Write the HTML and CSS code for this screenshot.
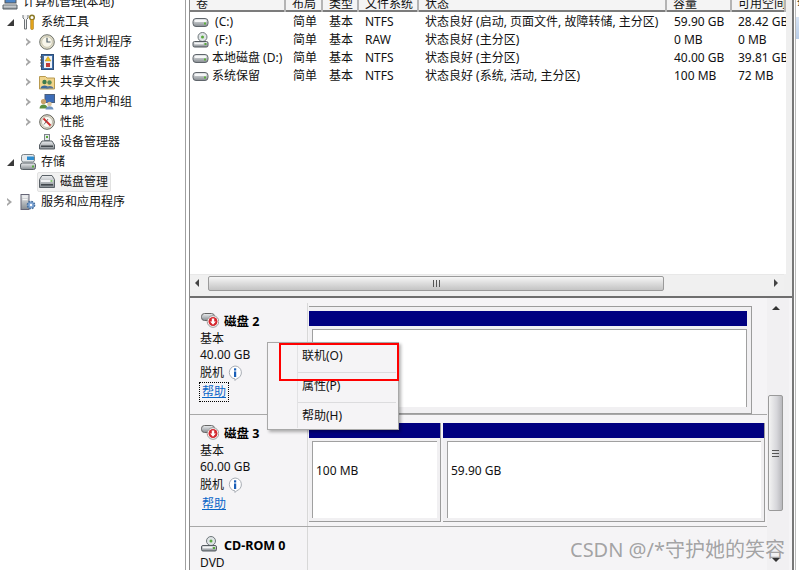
FILE: index.html
```html
<!DOCTYPE html>
<html lang="zh-CN">
<head>
<meta charset="utf-8">
<title>磁盘管理</title>
<link rel="stylesheet" href="styles.css">
</head>
<body>
<svg class="defs" width="0" height="0" aria-hidden="true">
  <defs>
    <linearGradient id="driveG" x1="0" y1="0" x2="0" y2="1"><stop offset="0" stop-color="#eceef0"/><stop offset="1" stop-color="#868c91"/></linearGradient>
    <symbol id="drive" viewBox="0 0 16 16"><rect x="0.500" y="4.500" width="15" height="8" rx="3" fill="url(#driveG)" stroke="#5f656b"/><rect x="2" y="6" width="12" height="2" rx="1" fill="#f6f7f8"/><rect x="11.500" y="8.500" width="2" height="2" fill="#5cb03c"/></symbol>
    <symbol id="cd" viewBox="0 0 16 16"><circle cx="10" cy="5" r="4.500" fill="#dfe4e6" stroke="#6f777b"/><circle cx="10" cy="5" r="1.500" fill="#59a83c"/><rect x="0.500" y="9.500" width="15" height="5.500" rx="1.500" fill="url(#driveG)" stroke="#555b60"/><rect x="2" y="11" width="9" height="1.300" fill="#f4f5f6"/><rect x="12" y="11" width="2" height="2" fill="#59a83c"/></symbol>
    <symbol id="offline" viewBox="0 0 18 16"><rect x="0.500" y="1.500" width="13" height="7" rx="3" fill="url(#driveG)" stroke="#666"/><circle cx="12" cy="9.500" r="5.800" fill="#fff" stroke="#9a9a9a"/><circle cx="12" cy="9.500" r="4.500" fill="#d4282e"/><path d="M10.800 6.500h2.400v3h1.700L12 12.800 9.100 9.500h1.700z" fill="#fff"/></symbol>
    <symbol id="info" viewBox="0 0 16 16"><path d="M8 1a6.500 6.500 0 0 1 1.500 12.800L8 15.500V13.900A6.500 6.500 0 0 1 8 1z" fill="#fff" stroke="#a8adb4"/><rect x="7" y="3.300" width="2.200" height="2.200" fill="#1a5fb8"/><rect x="7" y="6.500" width="2.200" height="5.500" fill="#1a5fb8"/></symbol>
    <symbol id="tools" viewBox="0 0 16 16"><path d="M3 1v3l1.500 1.500v9.500h2V5.500L8 4V1" fill="#f0f0f0" stroke="#6d7276" stroke-width="1"/><circle cx="12" cy="3.500" r="2.300" fill="none" stroke="#8c7a28" stroke-width="1.500"/><rect x="10.700" y="5.500" width="2.700" height="10" rx="1" fill="#e9a81c" stroke="#9b6e10" stroke-width=".6"/></symbol>
    <symbol id="clock" viewBox="0 0 16 16"><circle cx="8" cy="8" r="7.300" fill="#e0dcc8" stroke="#6f736c"/><circle cx="8" cy="8" r="5.300" fill="#f8f6ea" stroke="#b6b39d" stroke-width=".6"/><path d="M8 3.800V8h3.500" fill="none" stroke="#50606a" stroke-width="1.200"/></symbol>
    <symbol id="log" viewBox="0 0 16 16"><rect x="2.500" y="0.500" width="12" height="15" fill="#3f6ea8" stroke="#2d4e78"/><rect x="5" y="2" width="8" height="12" fill="#eef2f6"/><path d="M1 3h3M1 6h3M1 9h3M1 12h3" stroke="#555" stroke-width="1"/><path d="M9 2.500l3 4.500H6z" fill="#f2c21c" stroke="#9a7a10" stroke-width=".4"/><rect x="7" y="9" width="4" height="4" fill="#c23c38"/></symbol>
    <symbol id="share" viewBox="0 0 16 16"><path d="M0.500 2.500h6l1.500 1.500h7.500v11h-15z" fill="#f1d58c" stroke="#b89a50"/><circle cx="5.500" cy="8" r="2.200" fill="#3d7a4c"/><path d="M1.500 14.500c0-4 8-4 8 0z" fill="#3d6a9c"/><circle cx="10.500" cy="8.500" r="2.200" fill="#5b8a58"/><path d="M7 14.500c0-3.500 7.500-3.500 7.500 0z" fill="#56749a"/></symbol>
    <symbol id="users" viewBox="0 0 16 16"><rect x="6" y="0.500" width="9.500" height="8" fill="#3c6db8" stroke="#4b5f7c"/><circle cx="4.500" cy="7.500" r="2.600" fill="#c9a26a"/><path d="M0.500 14.500c0-5.500 8-5.500 8 0z" fill="#5a8f3f"/><circle cx="10.500" cy="10" r="2.300" fill="#d9c4a0"/><path d="M6.500 15.500c0-4.500 8-4.500 8 0z" fill="#6e93c0"/></symbol>
    <symbol id="perf" viewBox="0 0 16 16"><circle cx="8" cy="8" r="7.300" fill="#e6e1d0" stroke="#5f6058"/><circle cx="8" cy="8" r="5.500" fill="#fbfaf4" stroke="#9c9a8c" stroke-width=".6"/><path d="M4.500 4.500L11.500 11.500" stroke="#cf2a2a" stroke-width="1.800"/><path d="M5 10.500L9 5" stroke="#555" stroke-width=".8"/></symbol>
    <symbol id="device" viewBox="0 0 16 16"><rect x="5.500" y="0.500" width="5" height="6" fill="#e4e8ea" stroke="#7e858a"/><rect x="7" y="2" width="2" height="2" fill="#5aab3e"/><path d="M3 7h10l2.500 4v4H0.500v-4z" fill="url(#driveG)" stroke="#596066"/><rect x="2" y="11.500" width="12" height="1.500" fill="#42484d"/></symbol>
    <symbol id="disk" viewBox="0 0 16 16"><path d="M3 1.500h10l2.500 4v8H0.500v-8z" fill="url(#driveG)" stroke="#596066"/><rect x="2" y="6" width="12" height="2" fill="#f2f3f4"/><rect x="2" y="10" width="12" height="1.600" fill="#42484d"/><rect x="11.500" y="6.300" width="2" height="1.400" fill="#5aab3e"/></symbol>
    <symbol id="store" viewBox="0 0 16 16"><rect x="0.500" y="9" width="15" height="6.500" rx="2" fill="url(#driveG)" stroke="#596066"/><rect x="12" y="11.500" width="2" height="2" fill="#5aab3e"/><rect x="1.500" y="0.500" width="13" height="7.500" rx="2" fill="#e5e9ec" stroke="#7a8287"/><rect x="7" y="2.500" width="7" height="3.500" fill="#2e8ed0"/></symbol>
    <symbol id="svc" viewBox="0 0 16 16"><rect x="1" y="0.500" width="8" height="15" fill="url(#driveG)" stroke="#667"/><rect x="2.500" y="2.500" width="5" height="1.200" fill="#f5f5f5"/><rect x="2.500" y="5" width="5" height="1.200" fill="#f5f5f5"/><circle cx="11" cy="11" r="3.600" fill="#7fa6d6" stroke="#48709e" stroke-width="1.500" stroke-dasharray="1.800 1"/><circle cx="11" cy="11" r="1.200" fill="#fff"/></symbol>
    <symbol id="computer" viewBox="0 0 16 16"><rect x="3" y="0" width="11" height="9" fill="#4d86c8" stroke="#555"/><path d="M1 11h14v4H1z" fill="url(#driveG)" stroke="#596066"/></symbol>
  </defs>
</svg>

<div class="app">
  <nav class="tree">
    <div class="node lv0"><span class="tw"></span><svg class="ic"><use href="#computer"/></svg><span>计算机管理(本地)</span></div>
    <div class="node lv1"><span class="tw open"></span><svg class="ic"><use href="#tools"/></svg><span>系统工具</span></div>
    <div class="node lv2"><span class="tw"></span><svg class="ic"><use href="#clock"/></svg><span>任务计划程序</span></div>
    <div class="node lv2"><span class="tw"></span><svg class="ic"><use href="#log"/></svg><span>事件查看器</span></div>
    <div class="node lv2"><span class="tw"></span><svg class="ic"><use href="#share"/></svg><span>共享文件夹</span></div>
    <div class="node lv2"><span class="tw"></span><svg class="ic"><use href="#users"/></svg><span>本地用户和组</span></div>
    <div class="node lv2"><span class="tw"></span><svg class="ic"><use href="#perf"/></svg><span>性能</span></div>
    <div class="node lv2"><span class="tw none"></span><svg class="ic"><use href="#device"/></svg><span>设备管理器</span></div>
    <div class="node lv1"><span class="tw open"></span><svg class="ic"><use href="#store"/></svg><span>存储</span></div>
    <div class="node lv2 selected"><span class="tw none"></span><span class="sel"><svg class="ic"><use href="#disk"/></svg><span>磁盘管理</span></span></div>
    <div class="node lv1"><span class="tw"></span><svg class="ic"><use href="#svc"/></svg><span>服务和应用程序</span></div>
  </nav>

  <main class="main">
    <section class="volumes">
      <div class="vol-scroll">
        <div class="row head">
          <div class="c c1">卷</div><div class="c c2">布局</div><div class="c c3">类型</div><div class="c c4">文件系统</div><div class="c c5">状态</div><div class="c c6">容量</div><div class="c c7">可用空间</div>
        </div>
        <div class="row">
          <div class="c c1"><svg class="dv"><use href="#drive"/></svg><span class="gap"> (C:)</span></div><div class="c c2">简单</div><div class="c c3">基本</div><div class="c c4">NTFS</div><div class="c c5">状态良好 (启动, 页面文件, 故障转储, 主分区)</div><div class="c c6">59.90 GB</div><div class="c c7">28.42 GB</div>
        </div>
        <div class="row">
          <div class="c c1"><svg class="dv"><use href="#cd"/></svg><span class="gap"> (F:)</span></div><div class="c c2">简单</div><div class="c c3">基本</div><div class="c c4">RAW</div><div class="c c5">状态良好 (主分区)</div><div class="c c6">0 MB</div><div class="c c7">0 MB</div>
        </div>
        <div class="row">
          <div class="c c1"><svg class="dv"><use href="#drive"/></svg><span>本地磁盘 (D:)</span></div><div class="c c2">简单</div><div class="c c3">基本</div><div class="c c4">NTFS</div><div class="c c5">状态良好 (主分区)</div><div class="c c6">40.00 GB</div><div class="c c7">39.81 GB</div>
        </div>
        <div class="row">
          <div class="c c1"><svg class="dv"><use href="#drive"/></svg><span>系统保留</span></div><div class="c c2">简单</div><div class="c c3">基本</div><div class="c c4">NTFS</div><div class="c c5">状态良好 (系统, 活动, 主分区)</div><div class="c c6">100 MB</div><div class="c c7">72 MB</div>
        </div>
      </div>
      <div class="hbar">
        <span class="arrow left"></span>
        <div class="hthumb"><span class="grip"></span></div>
        <span class="arrow right"></span>
      </div>
    </section>

    <section class="disks">
      <div class="disk-list">
        <div class="disk d2">
          <div class="label">
            <div class="title"><svg class="off"><use href="#offline"/></svg><b>磁盘 2</b></div>
            <div>基本</div><div>40.00 GB</div>
            <div class="state">脱机 <svg class="inf"><use href="#info"/></svg></div>
            <div class="help"><a class="focus">帮助</a></div>
          </div>
          <div class="parts single">
            <div class="part p-full"><div class="bar"></div><div class="box"></div></div>
          </div>
        </div>
        <div class="disk">
          <div class="label">
            <div class="title"><svg class="off"><use href="#offline"/></svg><b>磁盘 3</b></div>
            <div>基本</div><div>60.00 GB</div>
            <div class="state">脱机 <svg class="inf"><use href="#info"/></svg></div>
            <div class="help"><a>帮助</a></div>
          </div>
          <div class="parts">
            <div class="part p-small"><div class="bar"></div><div class="box">100 MB</div></div>
            <div class="part p-big"><div class="bar"></div><div class="box">59.90 GB</div></div>
          </div>
        </div>
        <div class="disk cd">
          <div class="label">
            <div class="title"><svg class="cdi"><use href="#cd"/></svg><b>CD-ROM 0</b></div>
            <div>DVD</div>
          </div>
          <div class="parts"></div>
        </div>
      </div>
      <div class="vbar">
        <span class="arrow up"></span>
        <div class="vthumb"><span class="vgrip"></span></div>
        <span class="arrow down"></span>
      </div>
    </section>
  </main>
  <aside class="actions"><div class="act-head">操</div><div class="act-blue"></div></aside>
</div>

<div class="menu">
  <div class="mi">联机(O)</div>
  <div class="msep"></div>
  <div class="mi">属性(P)</div>
  <div class="msep"></div>
  <div class="mi">帮助(H)</div>
</div>
<div class="redbox"></div>
<div class="mark">CSDN @/*守护她的笑容</div>
</body>
</html>
```
FILE: styles.css
```css
* { box-sizing: border-box; }
html, body { margin: 0; padding: 0; width: 799px; height: 570px; overflow: hidden; background: #fff; }
body { font: 12px/16px "Noto Sans", "Noto Sans CJK SC", sans-serif; color: #111; position: relative; }
.defs { position: absolute; }
.app { display: flex; height: 570px; }

/* tree */
.tree { width: 186px; flex: none; border-right: 1px solid #a0a0a0; margin-top: -8px; height: 578px; background: #fff; }
.node { display: flex; align-items: center; height: 20px; }
.lv0 { padding-left: 2px; }
.lv0 .tw { display: none; }
.lv1 { padding-left: 6px; }
.lv2 { padding-left: 25px; }
.tw { width: 8px; height: 9px; margin-right: 6px; flex: none; position: relative; }
.tw::before { content: ""; position: absolute; left: 1px; top: 0; border-left: 5px solid #a6a6a6; border-top: 4.500px solid transparent; border-bottom: 4.500px solid transparent; }
.tw::after { content: ""; position: absolute; left: 1px; top: 2px; border-left: 2.500px solid #fff; border-top: 2.500px solid transparent; border-bottom: 2.500px solid transparent; }
.tw.open::before { left: 1px; top: 1px; border: 0; border-bottom: 7px solid #3a3a3a; border-left: 7px solid transparent; }
.tw.open::after, .tw.none::before, .tw.none::after { display: none; }
.ic { width: 16px; height: 16px; flex: none; margin-right: 5px; }
.sel { display: flex; align-items: center; height: 20px; background: #f2f2f2; border: 1px solid #e2e2e2; border-radius: 2px; margin-left: -2px; padding-right: 2px; }
.sel .ic { margin-left: 1px; }

/* main */
.main { width: 605px; flex: none; margin-left: 3px; border-left: 1px solid #8b8b8b; border-right: 2px solid #777; display: flex; flex-direction: column; height: 570px; }
.volumes { height: 298px; flex: none; border-bottom: 2px solid #6e6e6e; display: flex; flex-direction: column; background: #efefef; }
.vol-scroll { height: 274px; width: 596px; flex: none; overflow: hidden; background: #fff; }
.row { display: grid; grid-template-columns: 96px 37px 36px 60px 248px 65px 54px; height: 18px; align-items: center; width: 596px; white-space: nowrap; }
.row.head { height: 12px; align-items: end; background: #f4f4f4; border-bottom: 2px solid #7c7c7c; width: 594px; margin-bottom: 1px; }
.head .c { height: 22px; margin-top: -10px; padding: 6px 0 0 6px; border-right: 2px solid #b4b4b4; }
.c { overflow: hidden; min-width: 0; display: flex; align-items: center; }
.c3, .c4, .c5, .c7 { padding-left: 6px; }
.c2, .c6 { padding-left: 7px; }
.c1 { padding-left: 2px; }
.dv { width: 17px; height: 16px; flex: none; margin-right: 3px; }
.gap { white-space: pre; }

.hbar { width: 594px; height: 17px; background: #f0f0f0; border-top: 1px solid #e8e8e8; display: flex; align-items: center; position: relative; }
.hthumb { margin-left: 18px; width: 456px; height: 15px; border: 1px solid #9a9a9a; border-radius: 2px; background: linear-gradient(#f6f6f6, #dcdcdc 50%, #c4c4c4); display: flex; align-items: center; justify-content: center; }
.grip { width: 7px; height: 7px; background: repeating-linear-gradient(90deg, #555 0 1px, transparent 1px 3px); }
.arrow { width: 0; height: 0; display: block; flex: none; }
.arrow.left { position: absolute; left: 5px; border-right: 4px solid #444; border-top: 4px solid transparent; border-bottom: 4px solid transparent; }
.arrow.right { position: absolute; right: 6px; border-left: 4px solid #444; border-top: 4px solid transparent; border-bottom: 4px solid transparent; }

/* disks */
.disks { flex: 1; display: flex; background: #f5f4f6; min-height: 0; overflow: hidden; }
.disk-list { width: 578px; flex: none; }
.disk { display: flex; height: 112px; border-bottom: 1px solid #a8a8a8; }
.disk.d2 { height: 117px; padding-top: 5px; }
.disk.cd { border-bottom: 0; }
.label { width: 118px; flex: none; padding: 9px 0 0 10px; border-right: 1px solid #d8d8d8; line-height: 16px; }
.title { display: flex; align-items: center; height: 19px; font-size: 12px; color: #000; }
.title b { font-weight: 700; font-size: 12.500px; }
.off { width: 18px; height: 16px; margin: -4px 5px 0 1px; flex: none; }
.cdi { width: 16px; height: 18px; margin: -4px 7px 0 1px; flex: none; }
.state { display: flex; align-items: center; gap: 3px; height: 17px; margin-top: 1px; }
.inf { width: 16px; height: 16px; }
.help { margin-top: 2px; height: 19px; }
.help a { color: #0a66c8; text-decoration: underline; display: inline-block; padding: 1px 2px; height: 18px; }
.help a.focus { outline: 1px dotted #000; }
.parts { flex: 1; display: flex; padding: 8px 3px 0 1px; gap: 2px; height: 100%; }
.parts.single { padding-right: 20px; }
.part { height: 99px; border-right: 1px solid #9c9c9c; border-bottom: 1px solid #9c9c9c; display: flex; flex-direction: column; background: #f1f0f2; padding-right: 3px; }
.p-full { width: 443px; height: 108px; margin-top: -5px; padding: 4px 4px 0 0; border-top: 1px solid #9c9c9c; }
.p-full .bar { margin-right: 0; }
.p-full .box { margin-bottom: 6px; border-right: 1px solid #a0a0a0; }
.p-small { width: 132px; }
.p-big { width: 322px; }
.bar { height: 15px; background: #000080; flex: none; margin-right: -3px; }
.box { margin: 3px 0 3px 3px; flex: 1; background: #fff; border: 1px solid #a0a0a0; border-right: 0; border-bottom: 0; padding: 21px 0 0 3px; }
.p-big .box { margin-left: 4px; }
.vbar { width: 22px; flex: none; position: relative; background: #f1f0f2; margin-left: -1px; }
.vthumb { position: absolute; left: 1px; top: 97px; width: 15px; height: 116px; border: 1px solid #9a9a9a; border-radius: 2px; background: linear-gradient(90deg, #f3f3f3, #d6d6da 60%, #b8b8bc); display: flex; align-items: center; justify-content: center; }
.vgrip { width: 7px; height: 7px; border-top: 1px solid #555; border-bottom: 1px solid #555; background: linear-gradient(#555, #555) center/100% 1px no-repeat; }
.arrow.up { position: absolute; left: 5px; top: 8px; border-bottom: 4px solid #333; border-left: 4px solid transparent; border-right: 4px solid transparent; }
.arrow.down { position: absolute; left: 5px; top: 260px; border-top: 4px solid #333; border-left: 4px solid transparent; border-right: 4px solid transparent; }

/* actions */
.actions { flex: 1; background: #fff; overflow: hidden; border-left: 1px solid #bbb; margin-left: 1px; }
.act-head { height: 17px; margin-top: -8px; padding-left: 1px; padding-top: 1px; }
.act-blue { height: 22px; margin-top: 8px; background: linear-gradient(#d6e3f4, #b9cde8); }

/* overlays */
.menu { position: absolute; left: 267px; top: 342px; width: 132px; height: 88px; background: #f5f4f6; border: 1px solid #a8a8a8; box-shadow: 2px 2px 3px rgba(0,0,0,.3); padding-top: 2px; }
.menu::before { content: ""; position: absolute; left: 29px; top: 1px; bottom: 1px; width: 1px; background: #e2e2e4; }
.mi { height: 24px; padding-left: 34px; line-height: 22px; }
.msep { height: 1px; margin: 3px 2px 2px 30px; background: #dcdcde; }
.redbox { position: absolute; left: 279px; top: 343px; width: 120px; height: 38px; border: 2px solid #f00; }
.mark { position: absolute; left: 570px; top: 537px; font-size: 20px; line-height: 26px; color: rgba(110,110,110,.62); white-space: nowrap; }
```
